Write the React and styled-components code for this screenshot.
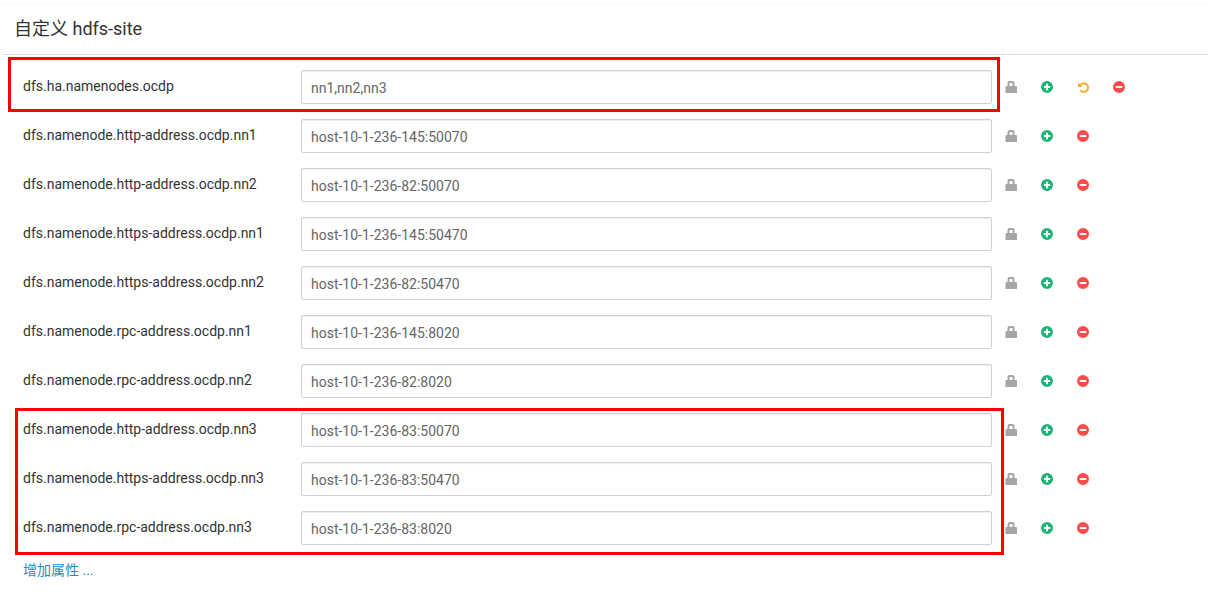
import { useState } from 'react';
import styled, { createGlobalStyle } from 'styled-components';

const GlobalStyle = createGlobalStyle`
  * {
    box-sizing: border-box;
  }

  body {
    margin: 0;
    background: #fff;
    color: #333;
    font-family: Roboto, 'Noto Sans CJK SC', sans-serif;
    font-size: 14px;
    line-height: 20px;
  }
`;

const Panel = styled.section`
  margin-top: 4px;
  border-top: 1px solid #f7f7f7;
`;

const Header = styled.header`
  margin-left: 3px;
  padding: 12px 11px 13px;
  border-bottom: 1px solid #ddd;
`;

const Title = styled.h4`
  margin: 0;
  font-size: 18px;
  font-weight: 400;
  line-height: 24px;
`;

const Form = styled.form`
  padding: 15px 0 0 23px;
`;

const Group = styled.div`
  position: relative;
`;

const Highlight = styled.div`
  position: absolute;
  inset: ${(props) => props.$inset};
  border: 3px solid #f00;
  pointer-events: none;
`;

const Row = styled.div`
  display: grid;
  grid-template-columns: 278px 1fr 203px;
  padding-bottom: 15px;
`;

const Label = styled.label`
  padding-top: 6px;
`;

const Field = styled.div`
  padding-right: 13px;
`;

const Input = styled.input`
  width: 100%;
  height: 34px;
  padding: 8px 9px 6px;
  border: 1px solid #cfd3d7;
  border-radius: 2px;
  background: #fff;
  box-shadow: inset 0 1px 1px rgba(0, 0, 0, 0.075);
  color: #666;
  font: inherit;

  &:focus {
    outline: none;
    border-color: #1291d9;
  }
`;

const Actions = styled.div`
  display: flex;
  align-items: center;
  gap: 24px;
`;

const IconButton = styled.button`
  display: flex;
  padding: 0;
  border: 0;
  background: none;
  color: ${(props) => props.$color};
  cursor: pointer;
`;

const AddLink = styled.a`
  display: inline-block;
  line-height: 18px;
  color: #1491c1;
  text-decoration: none;

  &:hover {
    text-decoration: underline;
  }
`;

const icons = {
  lock: (
    <path d="M2.5 5V2Q2.5 0 4.5 0h3q2 0 2 2v3h1.5q1 0 1 1v6H.5V6q0-1 1-1zM4.5 5h3V2.5q0-.5-.5-.5H5q-.5 0-.5.5z" />
  ),
  plus: (
    <path d="M6 0a6 6 0 1 1 0 12A6 6 0 0 1 6 0zM5 2.8V5H2.8v2H5v2.2h2V7h2.2V5H7V2.8z" />
  ),
  minus: <path d="M6 0a6 6 0 1 1 0 12A6 6 0 0 1 6 0zM2.7 5v2h6.6V5z" />,
  undo: (
    <>
      <path d="M1 1.5V6h4.5z" />
      <path
        d="M3 4.5C4.2 2.8 5.6 2.3 7 2.3a4.3 4.3 0 1 1-3.8 6.9"
        fill="none"
        stroke="currentColor"
        strokeWidth="2"
      />
    </>
  ),
};

function Action({ icon, color, label }) {
  return (
    <IconButton type="button" $color={color} aria-label={label} title={label}>
      <svg width="12" height="12" viewBox="0 0 12 12" fill="currentColor" fillRule="evenodd">
        {icons[icon]}
      </svg>
    </IconButton>
  );
}

function Property({ name, initial, changed }) {
  const [value, setValue] = useState(initial);

  return (
    <Row>
      <Label htmlFor={name}>{name}</Label>
      <Field>
        <Input
          id={name}
          type="text"
          value={value}
          onChange={(e) => setValue(e.target.value)}
        />
      </Field>
      <Actions>
        <Action icon="lock" color="#a6a6a6" label="Final" />
        <Action icon="plus" color="#1eb475" label="Override" />
        {changed && <Action icon="undo" color="#f5b02e" label="Undo" />}
        <Action icon="minus" color="#ff4b4b" label="Remove" />
      </Actions>
    </Row>
  );
}

const groups = [
  {
    inset: '-13px 208px 7px -15px',
    properties: [['dfs.ha.namenodes.ocdp', 'nn1,nn2,nn3', true]],
  },
  {
    properties: [
      ['dfs.namenode.http-address.ocdp.nn1', 'host-10-1-236-145:50070'],
      ['dfs.namenode.http-address.ocdp.nn2', 'host-10-1-236-82:50070'],
      ['dfs.namenode.https-address.ocdp.nn1', 'host-10-1-236-145:50470'],
      ['dfs.namenode.https-address.ocdp.nn2', 'host-10-1-236-82:50470'],
      ['dfs.namenode.rpc-address.ocdp.nn1', 'host-10-1-236-145:8020'],
      ['dfs.namenode.rpc-address.ocdp.nn2', 'host-10-1-236-82:8020'],
    ],
  },
  {
    inset: '-5px 204px 5px -8px',
    properties: [
      ['dfs.namenode.http-address.ocdp.nn3', 'host-10-1-236-83:50070'],
      ['dfs.namenode.https-address.ocdp.nn3', 'host-10-1-236-83:50470'],
      ['dfs.namenode.rpc-address.ocdp.nn3', 'host-10-1-236-83:8020'],
    ],
  },
];

function App() {
  return (
    <>
      <GlobalStyle />
      <Panel>
        <Header>
          <Title>自定义 hdfs-site</Title>
        </Header>
        <Form>
          {groups.map((group, i) => (
            <Group key={i}>
              {group.properties.map(([name, initial, changed]) => (
                <Property key={name} name={name} initial={initial} changed={changed} />
              ))}
              {group.inset && <Highlight $inset={group.inset} />}
            </Group>
          ))}
          <AddLink href="#">增加属性 ...</AddLink>
        </Form>
      </Panel>
    </>
  );
}

export default App;
